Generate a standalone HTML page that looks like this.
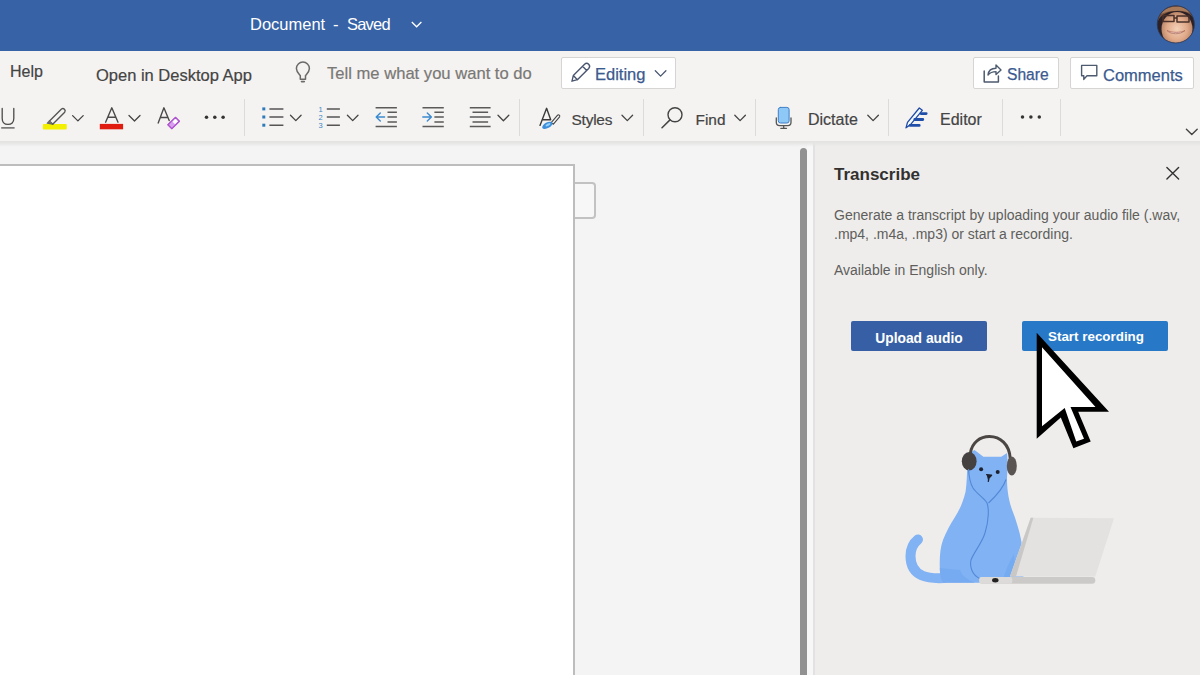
<!DOCTYPE html>
<html><head><meta charset="utf-8">
<style>
*{margin:0;padding:0;box-sizing:border-box}
html,body{width:1200px;height:675px;overflow:hidden;background:#f3f3f3;font-family:"Liberation Sans",sans-serif}
.a{position:absolute;white-space:nowrap}
#title{left:0;top:0;width:1200px;height:51px;background:#3763a6}
#rib{left:0;top:51px;width:1200px;height:90px;background:#f4f3f1}
#ribshadow{left:0;top:141px;width:1200px;height:6px;background:linear-gradient(#e3e2e1 0,#e6e6e5 30%,rgba(243,243,243,0) 100%)}
.t1{font-size:16px;line-height:1;color:#444;-webkit-text-stroke:0.2px currentColor}
.sep{width:1px;height:37px;top:99px;background:#dcdbda}
.btn{border:1px solid #d6d5d3;background:#fff;border-radius:2px}
.blue{color:#3b5a8f;line-height:1;-webkit-text-stroke:0.25px currentColor}
.t2{font-size:16px;line-height:1;color:#444;-webkit-text-stroke:0.2px currentColor}
#doc{left:0;top:141px;width:814px;height:534px;background:#f4f4f4}
#page{left:-2px;top:164px;width:577px;height:520px;background:#fff;border:2px solid #bdbdbd}
#tab{left:575px;top:181.5px;width:21px;height:37px;background:#f7f7f7;border:2px solid #c2c2c2;border-left:none;border-radius:0 4px 4px 0}
#sb{left:800px;top:148px;width:7px;height:540px;background:#919191;border-radius:4px 4px 0 0}
#panel{left:813px;top:141px;width:387px;height:534px;background:#eeedeb;border-left:2px solid #e2e2e2}
#strip{left:807px;top:141px;width:6px;height:534px;background:#f7f7f7}
.pbtn{height:30px;top:321px;border-radius:2px;color:#fff;font-weight:bold;font-size:13.8px;text-align:center;line-height:30px;padding-top:3px}
</style></head><body>
<div id="title" class="a"></div>
<div class="a" style="left:250px;top:16.2px;font-size:16.5px;line-height:1;color:#fff">Document</div>
<div class="a" style="left:333px;top:16.2px;font-size:16.5px;line-height:1;color:#fff">-</div>
<div class="a" style="left:347px;top:16.2px;font-size:16.5px;letter-spacing:-0.8px;line-height:1;color:#fff">Saved</div>
<svg class="a" style="left:410px;top:19px" width="14" height="10"><path d="M1.8 3 L6.6 7.8 L11.4 3" stroke="#fff" stroke-width="1.3" fill="none"/></svg>
<svg class="a" style="left:1155px;top:3px" width="42" height="42" viewBox="1155 3 42 42">
<defs><clipPath id="av"><circle cx="1175.8" cy="24.4" r="18.6"/></clipPath>
<radialGradient id="skin" cx="0.5" cy="0.5" r="0.6"><stop offset="0" stop-color="#f3d0b8"/><stop offset="0.55" stop-color="#e0aa8a"/><stop offset="1" stop-color="#a87258"/></radialGradient></defs>
<g clip-path="url(#av)">
<rect x="1155" y="3" width="42" height="42" fill="#2a2026"/>
<ellipse cx="1177" cy="29" rx="15.5" ry="17" fill="url(#skin)"/>
<path d="M1158 21 C1157 9 1166 4.5 1177 4.5 C1188 4.5 1195 10 1195 21 C1192 14 1186 11 1177 11 C1169 11 1161 14 1158 21 Z" fill="#7a5038"/>
<path d="M1161 14 C1164 9 1170 6.5 1176 7 C1182 6 1188 9 1191 13 C1186 11.5 1181 10 1176 11 C1170 10.5 1165 12 1161 14 Z" fill="#a87a5a"/>
<path d="M1163 15.5 H1174 V21.5 H1163 Z M1177 16 H1189 V22 H1177 Z M1174 18 H1177" fill="none" stroke="#4a3028" stroke-width="1.5" stroke-linejoin="round"/>
<path d="M1167 30.5 C1171 34.5 1180 35 1185 30.5 C1181 33 1172 33 1167 30.5 Z" fill="#fff" stroke="#b06a5a" stroke-width="0.8"/>
</g>
<circle cx="1175.8" cy="24.4" r="18.6" fill="none" stroke="#2c3a5a" stroke-width="0.8"/>
</svg>

<div id="rib" class="a"></div>
<div class="a t1" style="left:10px;top:64.2px;font-size:16px">Help</div>
<div class="a t1" style="left:96px;top:66.5px;font-size:16.5px">Open in Desktop App</div>
<div class="a t1" style="left:327px;top:65.9px;font-size:16.6px;color:#7a7876">Tell me what you want to do</div>
<div class="a btn" style="left:561px;top:57px;width:115px;height:32px"></div>
<div class="a blue" style="left:595px;top:66px;font-size:16.5px">Editing</div>
<div class="a btn" style="left:973px;top:57px;width:86px;height:32px"></div>
<div class="a blue" style="left:1007px;top:66.5px;font-size:15.6px">Share</div>
<div class="a btn" style="left:1070px;top:57px;width:124px;height:32px"></div>
<div class="a blue" style="left:1103px;top:66.5px;font-size:16.5px">Comments</div>

<div class="a sep" style="left:244px"></div>
<div class="a sep" style="left:519px"></div>
<div class="a sep" style="left:643px"></div>
<div class="a sep" style="left:755px"></div>
<div class="a sep" style="left:888px"></div>
<div class="a sep" style="left:1002px"></div>
<div class="a sep" style="left:1060px"></div>
<div class="a t2" style="left:571.5px;top:111.5px;letter-spacing:-0.2px;font-size:15.4px">Styles</div>
<div class="a t2" style="left:695.5px;top:111.5px;font-size:15.4px">Find</div>
<div class="a t2" style="left:808px;top:112px">Dictate</div>
<div class="a t2" style="left:940px;top:112px">Editor</div>

<svg class="a" style="left:0;top:0" width="1200" height="150" viewBox="0 0 1200 150">
<g fill="none" stroke-linecap="round" stroke-linejoin="round">
<!-- lightbulb -->
<path d="M300.3 75.5 C298.5 73.5 296.4 71.8 296.4 68.6 A6.5 6.5 0 0 1 309.4 68.6 C309.4 71.8 307.3 73.5 305.5 75.5 V79.2 H300.3 Z" stroke="#6a6a6a" stroke-width="1.5"/>
<path d="M301.5 81.6 H304.3" stroke="#6a6a6a" stroke-width="1.6"/>
<!-- editing pencil -->
<path d="M572 81.2 L573.3 75.6 L584.6 64.3 A2.9 2.9 0 0 1 588.7 68.4 L577.4 79.7 Z M582.6 66.3 L586.7 70.4 M573.3 75.6 L577.4 79.7" stroke="#4a5670" stroke-width="1.4"/>
<!-- share -->
<path d="M984.2 71 V82 H998.4 V76" stroke="#4d5a70" stroke-width="1.5"/>
<path d="M988 75 C988.5 70.5 991.5 68.3 996 68.3 V65 L1001 70 L996 74.6 V71.6 C992.5 71.6 990 72.5 988 75 Z" stroke="#4d5a70" stroke-width="1.4"/>
<!-- comments -->
<path d="M1081.6 65.4 H1096.8 V75.8 H1087 L1083.8 79.4 V75.8 H1081.6 Z" stroke="#4d5a70" stroke-width="1.4"/>
<!-- U -->
<path d="M2.2 108.5 V118.5 C2.2 122.5 4.5 124.4 8 124.4 C11.5 124.4 13.8 122.5 13.8 118.5 V108.5" stroke="#4a4a4a" stroke-width="1.3"/>
<path d="M1.2 127.9 H14.6" stroke="#555" stroke-width="1.3" stroke-linecap="butt"/>
<!-- highlighter -->
<rect x="42.8" y="124" width="24" height="5.6" fill="#f2f000" stroke="none" rx="1"/>
<path d="M49.5 121 L61.5 109 A2.3 2.3 0 0 1 64.7 112.2 L52.7 124.2 Z" stroke="#555" stroke-width="1.4"/>
<path d="M49.5 121 L47.3 123.2 L52.7 124.2" stroke="#666" stroke-width="1.3" fill="#777"/>
<path d="M72.6 115.6 L77.9 120.9 L83.2 115.6" stroke="#444" stroke-width="1.3"/>
<!-- font color -->
<path d="M105.6 122.2 L111.8 107.8 L118 122.2 M107.9 117.3 H115.7" stroke="#4a4a4a" stroke-width="1.4"/>
<rect x="99.8" y="123.9" width="23.3" height="5.4" fill="#e01b10" stroke="none"/>
<path d="M129 115.5 L134.5 121 L140 115.5" stroke="#444" stroke-width="1.3"/>
<!-- clear formatting -->
<path d="M158.2 123 L163.9 107.8 L169.2 120.5 M160.3 117.5 H167.3" stroke="#4a4a4a" stroke-width="1.4"/>
<path d="M168 124.8 L175.5 117.4 L179.3 121.2 L171.8 128.6 Z" stroke="#b055d0" stroke-width="1.3" fill="#fff"/>
<path d="M168 124.8 L171.8 121 L175.6 124.8 L171.8 128.6 Z" stroke="none" fill="#d9a0ee"/>
<path d="M168 124.8 L175.5 117.4 L179.3 121.2 L171.8 128.6 Z" stroke="#b055d0" stroke-width="1.3"/>
<!-- bullets -->
<g fill="#2d7bbd" stroke="none"><rect x="262.3" y="107.4" width="3" height="3"/><rect x="262.3" y="115.5" width="3" height="3"/><rect x="262.3" y="123.7" width="3" height="3"/></g>
<path d="M269.4 108.9 H283.4 M269.4 117 H283.4 M269.4 125.2 H283.4" stroke="#555" stroke-width="1.5" stroke-linecap="butt"/>
<path d="M290.5 115.3 L295.8 120.6 L301.1 115.3" stroke="#444" stroke-width="1.3"/>
<!-- numbering -->
<g fill="#3a86c6" stroke="none" font-family="Liberation Sans" font-size="7.5px"><text x="318.6" y="111.5">1</text><text x="318.6" y="119.6">2</text><text x="318.6" y="127.8">3</text></g>
<path d="M326.8 108.9 H339.9 M326.8 117 H339.9 M326.8 125.2 H339.9" stroke="#555" stroke-width="1.5" stroke-linecap="butt"/>
<path d="M347.4 115.3 L352.7 120.6 L358 115.3" stroke="#444" stroke-width="1.3"/>
<!-- decrease indent -->
<path d="M375.6 107.8 H396.9 M387.5 112.3 H396.9 M387.5 117 H396.9 M387.5 121.9 H396.9 M375.6 126.5 H396.9" stroke="#5a5a5a" stroke-width="1.5" stroke-linecap="butt"/>
<path d="M384.6 117 H376.2 M380.3 113 L376.2 117 L380.3 121" stroke="#3a8ad0" stroke-width="1.4"/>
<!-- increase indent -->
<path d="M422.5 107.8 H443.8 M434.4 112.3 H443.8 M434.4 117 H443.8 M434.4 121.9 H443.8 M422.5 126.5 H443.8" stroke="#5a5a5a" stroke-width="1.5" stroke-linecap="butt"/>
<path d="M422.8 117 H431.4 M427.3 113 L431.4 117 L427.3 121" stroke="#3a8ad0" stroke-width="1.4"/>
<!-- align -->
<path d="M469.8 107.8 H490.6 M472.5 112.3 H488.1 M469.8 117 H490.6 M472.5 121.9 H488.1 M469.8 126.5 H490.6" stroke="#5a5a5a" stroke-width="1.5" stroke-linecap="butt"/>
<path d="M498 115.3 L503.4 120.7 L508.8 115.3" stroke="#444" stroke-width="1.3"/>
<!-- styles -->
<path d="M540 125.4 L546.6 108.3 L550.7 119.7 M542.4 119.7 H550.7" stroke="#3a3a3a" stroke-width="1.4"/>
<path d="M551.2 122.6 L557.6 115.2 A1.3 1.3 0 0 1 559.6 116.8 L553.4 124.2 Z" stroke="#444" stroke-width="1.1" fill="#f4f4f4"/>
<ellipse cx="547.3" cy="125.3" rx="5.6" ry="2.8" transform="rotate(-28 547.3 125.3)" fill="#3d8ddb"/>
<ellipse cx="548" cy="124.8" rx="2.8" ry="1.2" transform="rotate(-28 548 124.8)" fill="#8fd0fa"/>
<!-- find -->
<circle cx="675" cy="114.8" r="7" stroke="#444" stroke-width="1.4"/>
<path d="M670 119.9 L662 127.7" stroke="#444" stroke-width="1.5"/>
<path d="M734.8 115.3 L740.1 120.6 L745.4 115.3" stroke="#444" stroke-width="1.3"/>
<path d="M622 115.3 L627.3 120.6 L632.6 115.3" stroke="#444" stroke-width="1.3"/>
<!-- mic -->
<rect x="778.3" y="107.4" width="10.8" height="15.6" rx="2.2" fill="#8ec8f7" stroke="#3f7fc6" stroke-width="1"/>
<path d="M776.3 118 V122.3 C776.3 124.5 777.6 125.6 779.6 125.6 H787.8 C789.8 125.6 791 124.5 791 122.3 V118 M783.7 125.6 V128 M780.8 128.3 H786.5" stroke="#555" stroke-width="1.3"/>
<path d="M867.8 115.3 L873.1 120.6 L878.4 115.3" stroke="#444" stroke-width="1.3"/>
<!-- editor -->
<path d="M906 127.8 L907.5 122.3 L919.3 108 L922.3 110.3 L910.5 124.6 Z" stroke="#1f4aa5" stroke-width="1.3" fill="#f4fbff"/>
<path d="M921 113.6 H926.2 M914.8 119.5 H922.8 M910.2 125.4 H919.2" stroke="#1f4fa8" stroke-width="2.8"/>
<!-- dots -->
<g fill="#333" stroke="none"><circle cx="206.5" cy="117.3" r="1.75"/><circle cx="214.8" cy="117.3" r="1.75"/><circle cx="223.1" cy="117.3" r="1.75"/>
<circle cx="1022.5" cy="117" r="1.75"/><circle cx="1030.9" cy="117" r="1.75"/><circle cx="1039.3" cy="117" r="1.75"/></g>
<path d="M1186.4 129.3 L1191.8 134.6 L1197.2 129.3" stroke="#444" stroke-width="1.4"/>
<path d="M655.3 70.8 L660.6 76.1 L665.9 70.8" stroke="#4a5670" stroke-width="1.3"/>
</g>
</svg>
<div id="doc" class="a"></div>
<div id="page" class="a"></div>
<div id="tab" class="a"></div>
<div id="strip" class="a"></div><div id="sb" class="a"></div>
<div id="panel" class="a"></div>
<div id="ribshadow" class="a"></div>
<div class="a" style="left:834px;top:165.5px;font-size:17px;line-height:1;font-weight:bold;color:#323130">Transcribe</div>
<div class="a" style="left:834px;top:205.9px;font-size:14px;line-height:19.2px;color:#605e5c;white-space:nowrap;width:370px">Generate a transcript by uploading your audio file (.wav,<br>.mp4, .m4a, .mp3) or start a recording.</div>
<div class="a" style="left:834px;top:263px;font-size:14px;line-height:1;color:#605e5c">Available in English only.</div>
<div class="a pbtn" style="left:851px;width:136px;background:#365fa5">Upload audio</div>
<div class="a pbtn" style="left:1022px;width:146px;background:#2878c8;font-size:13.4px;padding-left:2px;padding-top:1px">Start recording</div>
<svg class="a" style="left:0;top:0" width="1200" height="675" viewBox="0 0 1200 675">
<path d="M1166.9 167.4 L1178.6 179.1 M1178.6 167.4 L1166.9 179.1" stroke="#333" stroke-width="1.4" stroke-linecap="round"/>
<!-- cat tail -->
<path d="M944 578 C935 578.5 928 578 922 575.5 C913 571.5 910.5 564 910.5 556 C910.5 549 913 543.5 918 539.5" fill="none" stroke="#80b2f4" stroke-width="10" stroke-linecap="round"/>
<!-- cat body -->
<path d="M974.5 450.1 L983.4 456.7 L1001.2 456.7 L1007.1 453.1 C1007.8 462 1007.5 470 1007 478 C1007 488 1008 497 1011.5 508.3 C1016 520 1020 532 1022 545 C1023.5 556 1023.5 570 1023.4 582.7 L944 582.7 C941 581 940 576 939.8 568 C939.5 558 940 548 943 540 C946 532 950 525 955 517 C960 509 963 502 965.5 492 C967 484 967 470 967.4 462 C968 456 971 452 974.5 450.1 Z" fill="#80b2f4"/>
<path d="M944 582.7 C941 581 940 576 939.8 568 L960 570 C962 576 968 580 975 582.7 Z" fill="#74a8ef" opacity="0.7"/>
<path d="M1002 582.7 C1005 572 1009 562 1014 554 L1016 582.7 Z" fill="#6ea6ee" opacity="0.6"/>
<!-- headphones band -->
<path d="M970.4 453 C972 442.5 980 436.6 989.4 436.6 C1000 436.6 1009.5 444 1010.3 459" fill="none" stroke="#4a4644" stroke-width="3"/>
<ellipse cx="969.2" cy="461.2" rx="7.4" ry="9.2" fill="#454140"/>
<ellipse cx="1011.8" cy="466" rx="5" ry="9.5" fill="#5a5553"/>
<!-- face -->
<circle cx="981.1" cy="469.2" r="2" fill="#1e2230"/>
<circle cx="997.7" cy="472.1" r="2" fill="#1e2230"/>
<path d="M986.6 474.6 L991.6 475.2 L989 478 L988.3 481.3" fill="#1e2230" stroke="#1e2230" stroke-width="1.3" stroke-linejoin="round" stroke-linecap="round"/>
<!-- cord -->
<path d="M968.5 469 C969 477 970 483 973 488 C977 494 984 498 987 503 C989 508 989 520 985 533 C982 543 974 552 971 560 C969.5 567 972 575 980 578.7 C984 580 990 580 995 580 M1006 479.5 C1003 489 996 496 988.5 503" fill="none" stroke="#5288d6" stroke-width="1.1"/>
<!-- laptop -->
<path d="M1030.7 517.7 L1114 518.3 L1095.3 576.5 L1010 576.5 Z" fill="#e3e2e1"/>
<path d="M1030.7 517.7 L1033.4 517.7 L1016 576.5 L1010 576.5 Z" fill="#cac8c6"/>
<rect x="979.3" y="577" width="116" height="6.7" rx="3.3" fill="#cbcac8"/>
<rect x="979.3" y="577" width="33" height="6.7" rx="2" fill="#dcdbd9"/>
<ellipse cx="995.3" cy="580.2" rx="3.2" ry="2.2" fill="#222"/>
<!-- cursor -->
<path d="M1036.7 332.7 L1036.7 438.7 L1060.8 417.5 L1073.4 448.3 L1090.7 441.6 L1078.2 411.7 L1109 411.7 Z" fill="#000"/>
<path d="M1042 347.2 L1042 426.2 L1064.7 407.9 L1076.2 441.6 L1084 438.7 L1070.5 406.9 L1095.5 406.9 Z" fill="#fff"/>
</svg>
</body></html>
